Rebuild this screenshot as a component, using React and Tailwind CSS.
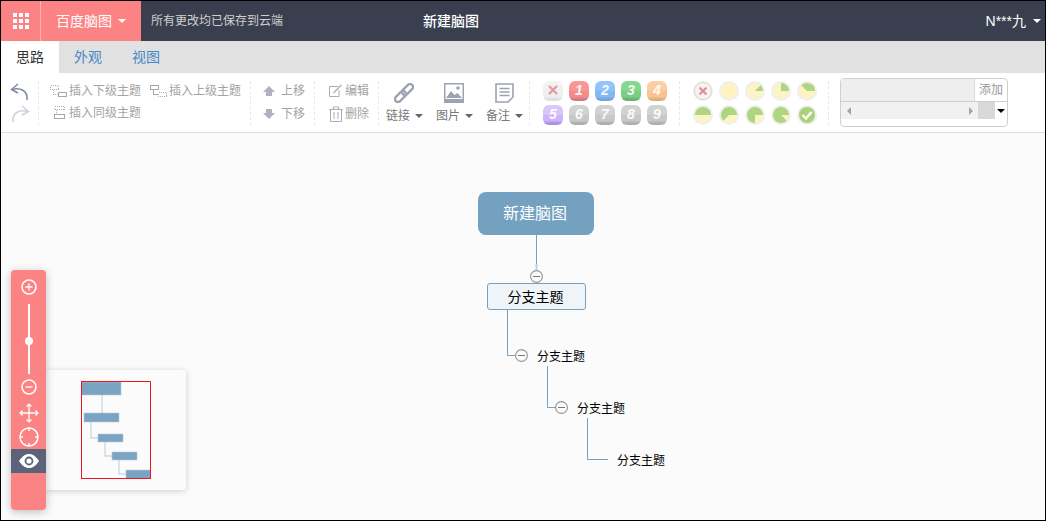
import React from "react";

const FONT = "[font-family:'Liberation_Sans','Noto_Sans_CJK_SC',sans-serif]";

function Caret({ className = "border-t-[#666]" }) {
  return <span className={`inline-block w-0 h-0 border-x-[4px] border-x-transparent border-t-[4px] ${className}`} />;
}

function GridIcon() {
  return (
    <svg width="16" height="16" viewBox="0 0 16 16" fill="#fff">
      {[0, 6, 12].map((y) => [0, 6, 12].map((x) => <rect key={`${x}-${y}`} x={x} y={y} width="4" height="4" />))}
    </svg>
  );
}

function Undo({ flip, color }) {
  return (
    <svg width="20" height="20" viewBox="0 0 20 20" fill="none" stroke={color} strokeWidth="1.5" className={flip ? "-scale-x-100" : ""}>
      <path d="M8 2 L1.5 7.5 L8 11" />
      <path d="M2 7.5 C10 5.5 18 8 17 18" />
    </svg>
  );
}

function InsertIcon({ kind }) {
  const dot = { stroke: "#b0b0b0", strokeDasharray: "1 1", fill: "none", shapeRendering: "crispEdges" };
  const box = { stroke: "#a8a8a8", fill: "none", shapeRendering: "crispEdges" };
  if (kind === "down")
    return (
      <svg width="17" height="12" viewBox="0 0 17 12">
        <rect x="0.5" y="0.5" width="8" height="4" {...dot} />
        <rect x="8.5" y="7.5" width="8" height="4" {...box} />
        <path d="M3.5 5 V9.5 H8" {...dot} />
      </svg>
    );
  if (kind === "up")
    return (
      <svg width="17" height="12" viewBox="0 0 17 12">
        <rect x="0.5" y="0.5" width="8" height="4" {...box} />
        <rect x="8.5" y="7.5" width="8" height="4" {...dot} />
        <path d="M3.5 5 V9.5 H8" {...box} />
      </svg>
    );
  return (
    <svg width="12" height="13" viewBox="0 0 12 13">
      <rect x="1.5" y="0.5" width="10" height="3" {...dot} />
      <rect x="1.5" y="8.5" width="10" height="4" {...box} />
      <path d="M3.5 4 V8" {...dot} />
    </svg>
  );
}

function Arrow({ down }) {
  return (
    <svg width="12" height="12" viewBox="0 0 12 12" fill="#aeb2bd" className={down ? "rotate-180" : ""}>
      <path d="M6 1 L12 7 H9 V11 H3 V7 H0 Z" />
    </svg>
  );
}

function EditIcon() {
  return (
    <svg width="14" height="13" viewBox="0 0 14 13" fill="none" stroke="#a9adb8">
      <path d="M9 2.5 H0.5 V12.5 H10 V6" />
      <path d="M4.5 9 L12.5 0.8" strokeWidth="1.3" />
    </svg>
  );
}

function TrashIcon() {
  return (
    <svg width="14" height="16" viewBox="0 0 14 16" fill="none" stroke="#a9adb8">
      <path d="M0 3.5 H14 M4.5 3.5 V1 H9.5 V3.5 M1.5 3.5 V15.5 H12.5 V3.5 M5 6 V13 M9 6 V13" />
    </svg>
  );
}

function LinkIcon() {
  return (
    <svg width="20" height="20" viewBox="0 0 20 20" fill="none" stroke="#9ea3b2" strokeWidth="2.4">
      <rect x="7" y="3.5" width="13" height="6" rx="3" transform="rotate(-45 13.5 6.5)" />
      <rect x="0" y="10.5" width="13" height="6" rx="3" transform="rotate(-45 6.5 13.5)" />
    </svg>
  );
}

function ImageIcon() {
  return (
    <svg width="20" height="20" viewBox="0 0 20 20">
      <rect x="0.75" y="0.75" width="18.5" height="18.5" fill="#fff" stroke="#9ea3b2" strokeWidth="1.5" />
      <rect x="0" y="16" width="20" height="4" fill="#9ea3b2" />
      <path d="M2 15 L7 8 L10.5 12 L13.5 10 L18 15 Z" fill="#9ea3b2" />
      <circle cx="14" cy="5" r="1.8" fill="#9ea3b2" />
    </svg>
  );
}

function NoteIcon() {
  return (
    <svg width="19" height="20" viewBox="0 0 19 20" fill="none" stroke="#9ea3b2" strokeWidth="1.6">
      <path d="M1 1 H18 V14 L13 19 H1 Z" />
      <path d="M4.5 5.5 H14.5 M4.5 9 H14.5 M4.5 12.5 H14.5" />
    </svg>
  );
}

const priorities = [
  { t: "x", c: "bg-[linear-gradient(#f4f4f4_0,#eeeeee_78%,#e0e0e0_92%)]" },
  { t: "1", c: "bg-[linear-gradient(#fc9797_0,#fb9494_50%,#f58a8a_50%,#f58a8a_78%,#cc7d8c_92%)]" },
  { t: "2", c: "bg-[linear-gradient(#92c6fb_0,#8ec2fa_50%,#84b9f6_50%,#84b9f6_78%,#78a3d2_92%)]" },
  { t: "3", c: "bg-[linear-gradient(#88d891_0,#84d58d_50%,#7acd84_50%,#7acd84_78%,#6aaf74_92%)]" },
  { t: "4", c: "bg-[linear-gradient(#fdcfa4_0,#fccc9f_50%,#fac290_50%,#fac290_78%,#dcab7e_92%)]" },
  { t: "5", c: "bg-[linear-gradient(#dcc7fb_0,#d8c2fa_50%,#ccb3f7_50%,#ccb3f7_78%,#ab8ce2_92%)]" },
  { t: "6", c: "bg-[linear-gradient(#d4d4d4_0,#d1d1d1_50%,#c8c8c8_50%,#c8c8c8_78%,#adadad_92%)]" },
  { t: "7", c: "bg-[linear-gradient(#d4d4d4_0,#d1d1d1_50%,#c8c8c8_50%,#c8c8c8_78%,#adadad_92%)]" },
  { t: "8", c: "bg-[linear-gradient(#d4d4d4_0,#d1d1d1_50%,#c8c8c8_50%,#c8c8c8_78%,#adadad_92%)]" },
  { t: "9", c: "bg-[linear-gradient(#d4d4d4_0,#d1d1d1_50%,#c8c8c8_50%,#c8c8c8_78%,#adadad_92%)]" },
];

function Priority({ t, c }) {
  return (
    <div className={`w-5 h-5 rounded-md flex items-center justify-center pb-[2px] text-white/90 text-[14px] font-bold italic leading-none [font-family:'Liberation_Sans',sans-serif] ${c}`}>
      {t === "x" ? (
        <svg width="10" height="10" viewBox="0 0 10 10" stroke="#e3999f" strokeWidth="2.2">
          <path d="M1 1 L9 9 M9 1 L1 9" />
        </svg>
      ) : (
        t
      )}
    </div>
  );
}

function Progress({ n }) {
  const cx = 10, cy = 10, r = 8;
  let inner = null;
  if (n === 0) {
    inner = (
      <>
        <circle cx={cx} cy={cy} r="8.5" fill="#f8f2f2" stroke="#d8d8d8" />
        <path d="M6.5 6.5 L13.5 13.5 M13.5 6.5 L6.5 13.5" stroke="#e08f96" strokeWidth="2.2" />
      </>
    );
  } else if (n === 9) {
    inner = (
      <>
        <circle cx={cx} cy={cy} r={r} fill="#a9d279" />
        <path d="M5.5 10 L9 13.5 L14.5 7" fill="none" stroke="#fff" strokeWidth="2.4" />
      </>
    );
  } else {
    const f = (n - 1) / 8;
    let slice = null;
    if (f > 0) {
      const a = -f * 2 * Math.PI;
      const x = cx + r * Math.cos(a);
      const y = cy + r * Math.sin(a);
      slice = <path d={`M${cx} ${cy} L${cx + r} ${cy} A${r} ${r} 0 ${f > 0.5 ? 1 : 0} 0 ${x} ${y} Z`} fill="#aed57f" />;
    }
    inner = (
      <>
        <circle cx={cx} cy={cy} r={r} fill="#fdf3c3" />
        {slice}
      </>
    );
  }
  return (
    <svg width="20" height="20" viewBox="0 0 20 20">
      <circle cx={cx} cy={cy} r="10" fill="#efefef" />
      {inner}
    </svg>
  );
}

function Section({ className, children }) {
  return <div className={`h-11 border-r border-dashed border-[#e8e8e8] shrink-0 ${className}`}>{children}</div>;
}

function Cmd({ icon, label, className = "" }) {
  return (
    <div className={`h-3 flex items-center text-[12px] leading-none text-[#a3a3a3] ${className}`}>
      {icon}
      <span>{label}</span>
    </div>
  );
}

function BigCmd({ icon, label }) {
  return (
    <div className="flex flex-col items-center w-[37px] pt-[2px]">
      <div className="h-5 flex items-center pr-[1px]">{icon}</div>
      <div className="flex items-center gap-[5px] text-[12px] leading-none text-[#777] mt-[7px] whitespace-nowrap">
        {label}
        <Caret className="border-t-[#666]" />
      </div>
    </div>
  );
}

function Exp({ className }) {
  return (
    <svg width="13" height="13" viewBox="0 0 13 13" className={`absolute ${className}`}>
      <circle cx="6.5" cy="6.5" r="5.9" fill="#fbfbfb" stroke="#999" strokeWidth="1.2" />
      <path d="M3 6.5 H10" stroke="#777" />
    </svg>
  );
}

function Minimap() {
  return (
    <svg width="70" height="98" viewBox="0 0 70 98" className="block">
      <g fill="none" stroke="#cddae4" strokeWidth="1.4">
        <path d="M21 14 V32" />
        <path d="M10 41 V57 H17" />
        <path d="M24 61 V75 H31" />
        <path d="M38 79 V93 H45" />
      </g>
      <rect x="0" y="1" width="40" height="13" fill="#7aa4c1" stroke="#b4cadb" strokeWidth="0.6" />
      <rect x="3" y="32" width="35" height="9" fill="#7aa4c1" stroke="#b4cadb" strokeWidth="0.6" />
      <rect x="17" y="53" width="25" height="8" fill="#7aa4c1" stroke="#b4cadb" strokeWidth="0.6" />
      <rect x="31" y="71" width="25" height="8" fill="#7aa4c1" stroke="#b4cadb" strokeWidth="0.6" />
      <rect x="45" y="89" width="25" height="9" fill="#7aa4c1" stroke="#b4cadb" strokeWidth="0.6" />
      <rect x="0.5" y="0.5" width="69" height="97" fill="none" stroke="#f2151c" />
    </svg>
  );
}

function ZoomPanel() {
  return (
    <div className="absolute left-[10px] top-[269px] w-[35px] h-[240px] bg-[#fc8383] rounded-[4px] shadow-[0_2px_8px_rgba(0,0,0,0.25)] flex flex-col items-center">
      <svg width="18" height="18" viewBox="0 0 18 18" fill="none" stroke="#fff" className="mt-[8px] shrink-0">
        <circle cx="9" cy="9" r="7" strokeWidth="1.6" />
        <path d="M5.5 9 H12.5 M9 5.5 V12.5" strokeWidth="1.3" />
      </svg>
      <div className="relative mt-[8px] w-[2px] h-[70px] bg-white shrink-0">
        <div className="absolute left-[-3px] top-[33px] w-2 h-2 rounded-full bg-white" />
      </div>
      <svg width="18" height="18" viewBox="0 0 18 18" fill="none" stroke="#fff" className="mt-[4px] shrink-0">
        <circle cx="9" cy="9" r="7" strokeWidth="1.6" />
        <path d="M5.5 9 H12.5" strokeWidth="1.3" />
      </svg>
      <svg width="20" height="20" viewBox="0 0 20 20" fill="none" stroke="#fff" className="mt-[7px] shrink-0">
        <path d="M10 1 V19 M1 10 H19" strokeWidth="1.3" />
        <path d="M7.5 3.5 L10 1 L12.5 3.5 M7.5 16.5 L10 19 L12.5 16.5 M3.5 7.5 L1 10 L3.5 12.5 M16.5 7.5 L19 10 L16.5 12.5" strokeWidth="1.2" />
      </svg>
      <svg width="20" height="20" viewBox="0 0 20 20" fill="none" stroke="#fff" className="mt-[4px] shrink-0">
        <circle cx="10" cy="10" r="9" strokeWidth="1.5" />
        <path d="M10 1 V4 M10 16 V19 M1 10 H4 M16 10 H19" strokeWidth="1.5" />
      </svg>
      <div className="mt-[2px] w-full h-6 bg-[#5a6378] flex items-center justify-center shrink-0">
        <svg width="20" height="14" viewBox="0 0 20 14">
          <path d="M0 7 C4 1 7 0 10 0 C13 0 16 1 20 7 C16 13 13 14 10 14 C7 14 4 13 0 7 Z" fill="#fff" />
          <circle cx="10" cy="7" r="4.4" fill="#5a6378" />
          <circle cx="10" cy="7" r="2.6" fill="#fff" />
        </svg>
      </div>
    </div>
  );
}

export default function App() {
  return (
    <div className={`relative w-[1046px] h-[521px] border border-black bg-[#fbfbfb] overflow-hidden ${FONT}`}>
      {/* Header */}
      <div className="h-10 bg-[#393f4f] flex items-center text-white">
        <div className="w-[39px] h-full bg-[#fc8383] flex items-center justify-center border-r border-[#fdb3b3] box-content">
          <GridIcon />
        </div>
        <div className="w-[100px] h-full bg-[#fc8383] flex items-center justify-center gap-[6px] text-[14px]">
          百度脑图 <Caret className="border-t-white" />
        </div>
        <div className="ml-[10px] text-[12px] text-[#d0d0d0] w-[272px]">所有更改均已保存到云端</div>
        <div className="text-[14px] font-medium">新建脑图</div>
        <div className="ml-auto mr-[4px] flex items-center gap-[7px] text-[14px]">
          N***九 <Caret className="border-t-white" />
        </div>
      </div>

      {/* Tabs */}
      <div className="h-[32px] bg-[#e1e1e1] flex items-stretch text-[14px]">
        <div className="w-[58px] bg-white flex items-center justify-center text-[#333]">思路</div>
        <div className="w-[58px] flex items-center justify-center text-[#4a87c5]">外观</div>
        <div className="w-[58px] flex items-center justify-center text-[#4a87c5]">视图</div>
      </div>

      {/* Toolbar */}
      <div className="h-[60px] bg-white border-b border-[#dedede] flex items-center">
        <Section className="w-[38px] flex flex-col items-center justify-between py-[1px]">
          <Undo color="#7f8ba3" />
          <Undo flip color="#ccd1dc" />
        </Section>

        <Section className="w-[212px] pl-[11px] pt-[4px] flex flex-col gap-[10px]">
          <div className="flex h-3">
            <Cmd className="w-[100px]" icon={<span className="w-[19px] flex"><InsertIcon kind="down" /></span>} label="插入下级主题" />
            <Cmd icon={<span className="w-[19px] flex"><InsertIcon kind="up" /></span>} label="插入上级主题" />
          </div>
          <Cmd className="pl-[3px]" icon={<span className="w-[16px] flex"><InsertIcon kind="same" /></span>} label="插入同级主题" />
        </Section>

        <Section className="w-[64px] pl-[12px] pt-[4px] flex flex-col gap-[11px]">
          <Cmd icon={<span className="w-[18px] flex"><Arrow /></span>} label="上移" />
          <Cmd icon={<span className="w-[18px] flex"><Arrow down /></span>} label="下移" />
        </Section>

        <Section className="w-[64px] pl-[14px] pt-[4px] flex flex-col gap-[11px]">
          <Cmd icon={<span className="w-[16px] flex"><EditIcon /></span>} label="编辑" />
          <Cmd icon={<span className="w-[16px] flex"><TrashIcon /></span>} label="删除" />
        </Section>

        <Section className="w-[151px] pl-[7px] flex gap-[13px]">
          <BigCmd icon={<LinkIcon />} label="链接" />
          <BigCmd icon={<ImageIcon />} label="图片" />
          <BigCmd icon={<NoteIcon />} label="备注" />
        </Section>

        <Section className="w-[150px] pl-[13px] grid grid-cols-[repeat(5,20px)] grid-rows-[repeat(2,20px)] gap-x-[6px] gap-y-[4px] content-center">
          {priorities.map((p) => (
            <Priority key={p.t} {...p} />
          ))}
        </Section>

        <Section className="w-[149px] pl-[13px] grid grid-cols-[repeat(5,20px)] grid-rows-[repeat(2,20px)] gap-x-[6px] gap-y-[4px] content-center">
          {[0, 1, 2, 3, 4, 5, 6, 7, 8, 9].map((n) => (
            <Progress key={n} n={n} />
          ))}
        </Section>

        <div className="ml-[11px] w-[168px] h-[49px] border border-[#cfcfcf] rounded-[4px] overflow-hidden flex flex-col text-[12px] bg-white">
          <div className="h-[22px] flex border-b border-[#cfcfcf] box-content">
            <div className="w-[134px] bg-[#eeeeee] border-r border-[#d8d8d8]" />
            <div className="flex-1 flex items-center justify-center text-[#999]">添加</div>
          </div>
          <div className="h-[17px] flex items-center">
            <div className="w-[154px] h-full bg-[#f1f1f1] flex items-center relative">
              <span className="ml-[6px] w-0 h-0 border-y-[4px] border-y-transparent border-r-[4px] border-r-[#a3a3a3]" />
              <span className="ml-[118px] w-0 h-0 border-y-[4px] border-y-transparent border-l-[4px] border-l-[#a3a3a3]" />
              <div className="absolute right-0 top-0 h-full w-[17px] bg-[#d8d8d8]" />
            </div>
            <div className="flex-1 flex justify-center">
              <Caret className="border-t-black" />
            </div>
          </div>
        </div>
      </div>

      {/* Canvas: mind map */}
      <svg className="absolute left-[-1px] top-[-1px] pointer-events-none" width="1046" height="521" fill="none" stroke="#73a1bf">
        <path d="M536.5 235 V264" />
        <path d="M536.5 264 V270" stroke="#b9d0df" strokeWidth="2" />
        <path d="M507.5 310 V355.5 H516" />
        <path d="M547.5 366 V407.5 H556" />
        <path d="M587.5 418 V459.5 H608" />
      </svg>

      <div className="absolute left-[477px] top-[191px] w-[116px] h-[43px] pr-[2px] pt-[1px] rounded-[8px] bg-[#73a1bf] text-white text-[16px] flex items-center justify-center">新建脑图</div>
      <Exp className="left-[529px] top-[269px]" />
      <div className="absolute left-[486px] top-[282px] w-[99px] h-[27px] pr-[2px] pt-[1px] rounded-[3px] border border-[#73a1bf] bg-[#eff4f8] text-black text-[14px] flex items-center justify-center">分支主题</div>
      <Exp className="left-[514px] top-[348px]" />
      <div className="absolute left-[536px] top-[347px] text-[12px] leading-[18px] text-black">分支主题</div>
      <Exp className="left-[554px] top-[400px]" />
      <div className="absolute left-[576px] top-[399px] text-[12px] leading-[18px] text-black">分支主题</div>
      <div className="absolute left-[616px] top-[451px] text-[12px] leading-[18px] text-black">分支主题</div>

      {/* Navigator */}
      <div className="absolute left-[45px] top-[369px] w-[140px] h-[120px] bg-[#fbfbfb] rounded-r-[3px] shadow-[0_1px_6px_rgba(0,0,0,0.18)] pl-[35px] pt-[11px]">
        <Minimap />
      </div>
      <ZoomPanel />
    </div>
  );
}
